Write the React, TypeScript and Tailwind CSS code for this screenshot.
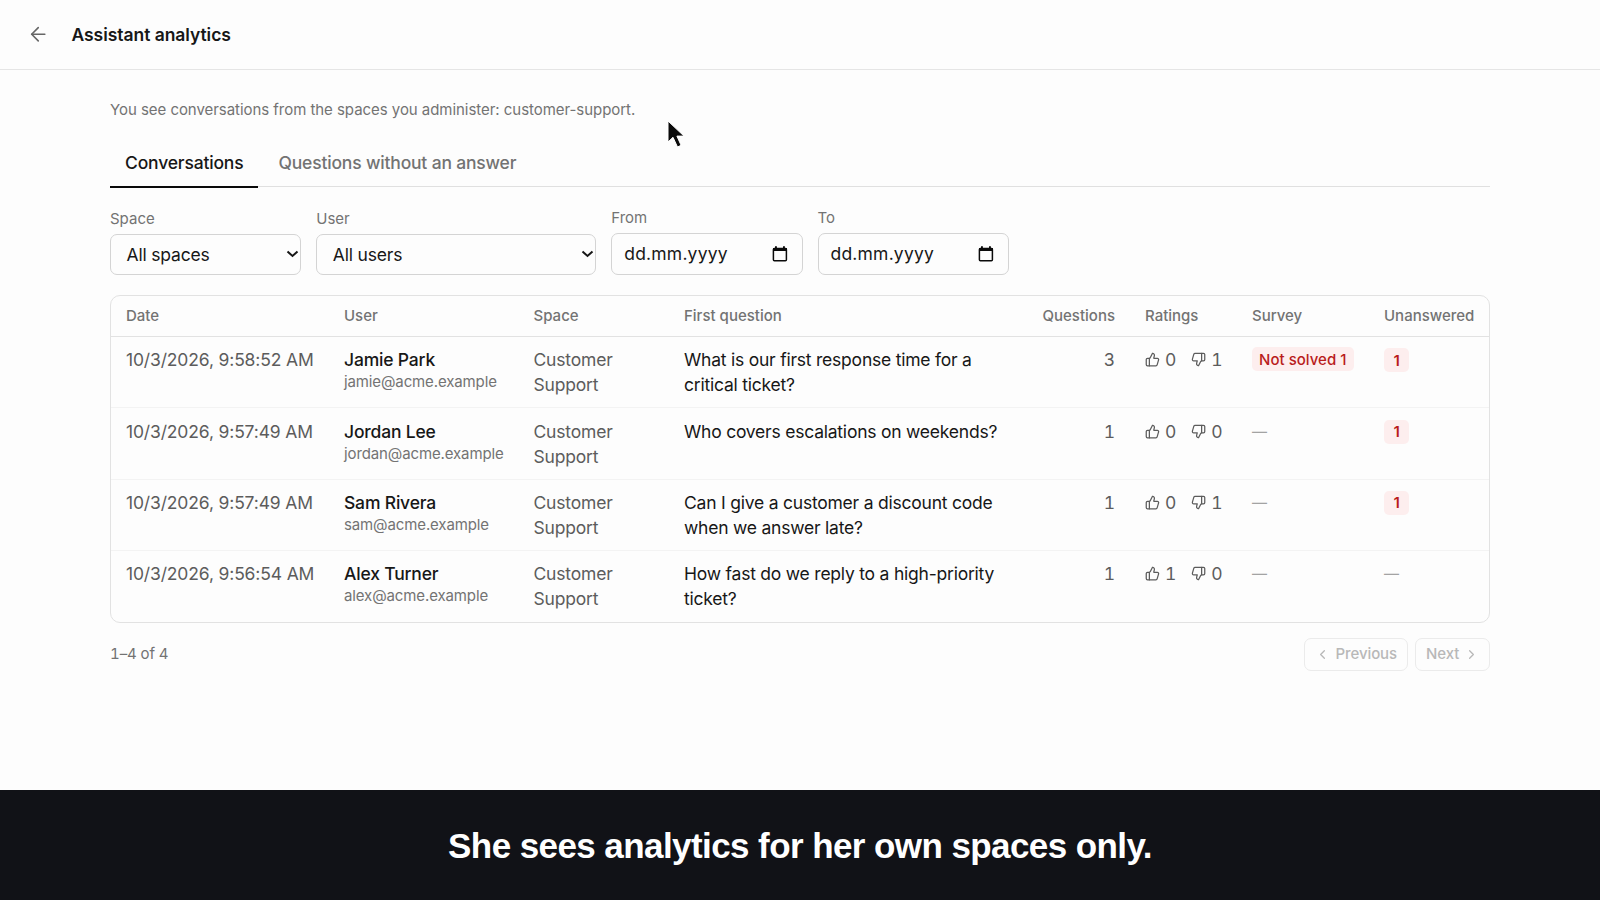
import type { ReactNode } from 'react';
import { ArrowLeft, ChevronLeft, ChevronRight, ThumbsDown, ThumbsUp } from 'lucide-react';

interface Conversation {
  id: number;
  date: string;
  name: string;
  email: string;
  space: string;
  question: string;
  questions: number;
  up: number;
  down: number;
  survey: string | null;
  unanswered: number;
}

const conversations: Conversation[] = [
  { id: 1, date: '10/3/2026, 9:58:52 AM', name: 'Jamie Park', email: 'jamie@acme.example', space: 'Customer Support', question: 'What is our first response time for a critical ticket?', questions: 3, up: 0, down: 1, survey: 'Not solved 1', unanswered: 1 },
  { id: 2, date: '10/3/2026, 9:57:49 AM', name: 'Jordan Lee', email: 'jordan@acme.example', space: 'Customer Support', question: 'Who covers escalations on weekends?', questions: 1, up: 0, down: 0, survey: null, unanswered: 1 },
  { id: 3, date: '10/3/2026, 9:57:49 AM', name: 'Sam Rivera', email: 'sam@acme.example', space: 'Customer Support', question: 'Can I give a customer a discount code when we answer late?', questions: 1, up: 0, down: 1, survey: null, unanswered: 1 },
  { id: 4, date: '10/3/2026, 9:56:54 AM', name: 'Alex Turner', email: 'alex@acme.example', space: 'Customer Support', question: 'How fast do we reply to a high-priority ticket?', questions: 1, up: 1, down: 0, survey: null, unanswered: 0 },
];

function Field({ label, children }: { label: string; children: ReactNode }) {
  return (
    <div className="flex flex-col gap-[5px]">
      <span className="text-[15px] leading-5 tracking-normal text-[#737373]">{label}</span>
      {children}
    </div>
  );
}

function SelectBox({ value, className }: { value: string; className: string }) {
  return (
    <button className={`flex h-[41px] items-center justify-between rounded-[7px] border border-[#d4d4d4] pl-[15.5px] pr-[1px] ${className}`}>
      {value}
      <svg width="13" height="8" viewBox="0 0 13 8" fill="none" className="-mt-0.5">
        <path d="M1.5 1.5 6.5 6l5-4.5" stroke="#171717" strokeWidth="2" />
      </svg>
    </button>
  );
}

function DateBox() {
  return (
    <button className="flex h-[42px] w-[191.25px] items-center justify-between rounded-[7px] border border-[#d4d4d4] pb-px pl-3 pr-[14px]">
      <span className="tracking-[0.2px]">dd.mm.yyyy</span>
      <svg width="16" height="16" viewBox="0 0 16 16" fill="none">
        <rect x="1.4" y="2.6" width="13" height="12.2" rx="1" stroke="#0a0a0a" strokeWidth="1.5" />
        <path d="M1 2h14v3H1zM3 .3h1.9v2H3zM11 .3h1.9v2H11z" fill="#0a0a0a" />
      </svg>
    </button>
  );
}

export default function App() {
  return (
    <div className="flex h-[900px] w-[1600px] flex-col overflow-hidden bg-[#fdfdfd] font-['Inter',sans-serif] text-[17.5px] leading-[25px] tracking-[-0.18px] text-[#171717]">
      <header className="flex h-[70px] shrink-0 items-center border-b border-[#e5e5e5] pl-[27px]">
        <ArrowLeft className="mr-[22px] h-[22.5px] w-[22.5px] text-[#666]" strokeWidth={1.7} />
        <h1 className="font-semibold tracking-[-0.05px]">Assistant analytics</h1>
      </header>

      <main className="mx-auto w-[1380px] flex-1 pt-[30px]">
        <p className="text-[15px] leading-5 tracking-[-0.045px] text-[#737373]">You see conversations from the spaces you administer: customer-support.</p>

        <nav className="mt-5 flex h-[47px] gap-[5px] border-b border-[#e0e0e0] font-medium">
          <button className="h-[48px] w-[147.5px] border-b-2 border-[#0a0a0a] pb-[2px] pl-px">Conversations</button>
          <button className="h-[48px] px-4 pb-1 text-[#737373]">Questions without an answer</button>
        </nav>

        <div className="mt-5 flex h-[68px] items-end gap-[15px]">
          <Field label="Space"><SelectBox value="All spaces" className="w-[191.25px]" /></Field>
          <Field label="User"><SelectBox value="All users" className="w-[280px]" /></Field>
          <Field label="From"><DateBox /></Field>
          <Field label="To"><DateBox /></Field>
        </div>

        <div className="mt-5 overflow-hidden rounded-[10px] border border-[#e2e2e2]">
          <table className="w-full table-fixed border-separate border-spacing-0 text-left">
            <colgroup>
              <col className="w-[218px]" />
              <col className="w-[189.5px]" />
              <col className="w-[150.5px]" />
              <col className="w-[343px]" />
              <col className="w-[118px]" />
              <col className="w-[107px]" />
              <col className="w-[132px]" />
              <col />
            </colgroup>
            <thead>
              <tr className="text-[15px] leading-5 tracking-normal text-[#737373] [&>th]:h-[41px] [&>th]:border-b [&>th]:border-[#e2e2e2] [&>th]:px-[15px] [&>th]:font-medium">
                <th>Date</th>
                <th>User</th>
                <th>Space</th>
                <th>First question</th>
                <th className="text-right">Questions</th>
                <th>Ratings</th>
                <th>Survey</th>
                <th>Unanswered</th>
              </tr>
            </thead>
            <tbody>
              {conversations.map((c) => (
                <tr key={c.id} className="text-[#5c5c5c] [&>td]:h-[71.25px] [&>td]:border-b [&>td]:border-[#f3f3f3] [&>td]:pl-[15px] [&>td]:pt-[10.25px] [&>td]:align-top last:[&>td]:h-[71px] last:[&>td]:border-0">
                  <td className="whitespace-nowrap tracking-[-0.15px]">{c.date}</td>
                  <td>
                    <div className="font-medium text-[#171717]">{c.name}</div>
                    <div className="text-[15px] leading-5 tracking-[-0.12px] text-[#737373]">{c.email}</div>
                  </td>
                  <td className="pr-[15px]">{c.space}</td>
                  <td className="tracking-[-0.22px] text-[#171717]">{c.question}</td>
                  <td className="pr-[15px] text-right tabular-nums">{c.questions}</td>
                  <td>
                    <div className="flex gap-[15px] whitespace-nowrap tabular-nums">
                      <span className="flex items-center gap-[5px]"><ThumbsUp className="h-[15px] w-[15px]" />{c.up}</span>
                      <span className="flex items-center gap-[5px]"><ThumbsDown className="h-[15px] w-[15px]" />{c.down}</span>
                    </div>
                  </td>
                  <td>
                    {c.survey ? (
                      <span className="flex h-6 w-fit items-center whitespace-nowrap rounded-[5px] bg-[#fdeeee] px-[7px] text-[15px] font-medium tracking-[0.03px] text-[#b91c1c]">{c.survey}</span>
                    ) : <span className="inline-block align-top text-[15px] text-[#a3a3a3]">—</span>}
                  </td>
                  <td>
                    {c.unanswered > 0 ? (
                      <span className="mt-px flex h-6 w-[25px] items-center justify-center rounded-[5px] bg-[#fdeeee] text-[15px] font-semibold text-[#b91c1c]">{c.unanswered}</span>
                    ) : <span className="inline-block align-top text-[15px] text-[#a3a3a3]">—</span>}
                  </td>
                </tr>
              ))}
            </tbody>
          </table>
        </div>

        <div className="mt-[15px] flex items-center justify-between text-[15px] leading-5 tracking-[-0.1px] text-[#737373]">
          <span className="tabular-nums">1–4 of 4</span>
          <div className="flex gap-[7px] font-medium text-[#b8b8b8]">
            <button className="flex h-[33px] w-[104px] items-center justify-between rounded-[7px] border border-[#ebebeb] px-[10px]"><ChevronLeft className="h-[15px] w-[15px]" />Previous</button>
            <button className="flex h-[33px] w-[75px] items-center justify-between rounded-[7px] border border-[#ebebeb] px-[10px]">Next<ChevronRight className="h-[15px] w-[15px]" /></button>
          </div>
        </div>
      </main>

      <footer className="flex h-[110px] shrink-0 items-center justify-center bg-[#111217] font-['Liberation_Sans',sans-serif] text-[35px] font-bold tracking-[-0.58px] text-white">
        She sees analytics for her own spaces only.
      </footer>

      {/* pointer */}
      <svg className="absolute left-[667px] top-[120px]" width="19" height="28" viewBox="0 0 19 28">
        <path d="M1 1v21l5-4.7L10.5 27l3.6-1.7-4.2-9.2H17z" fill="#0a0a0a" stroke="#fff" strokeWidth="1" />
      </svg>
    </div>
  );
}
